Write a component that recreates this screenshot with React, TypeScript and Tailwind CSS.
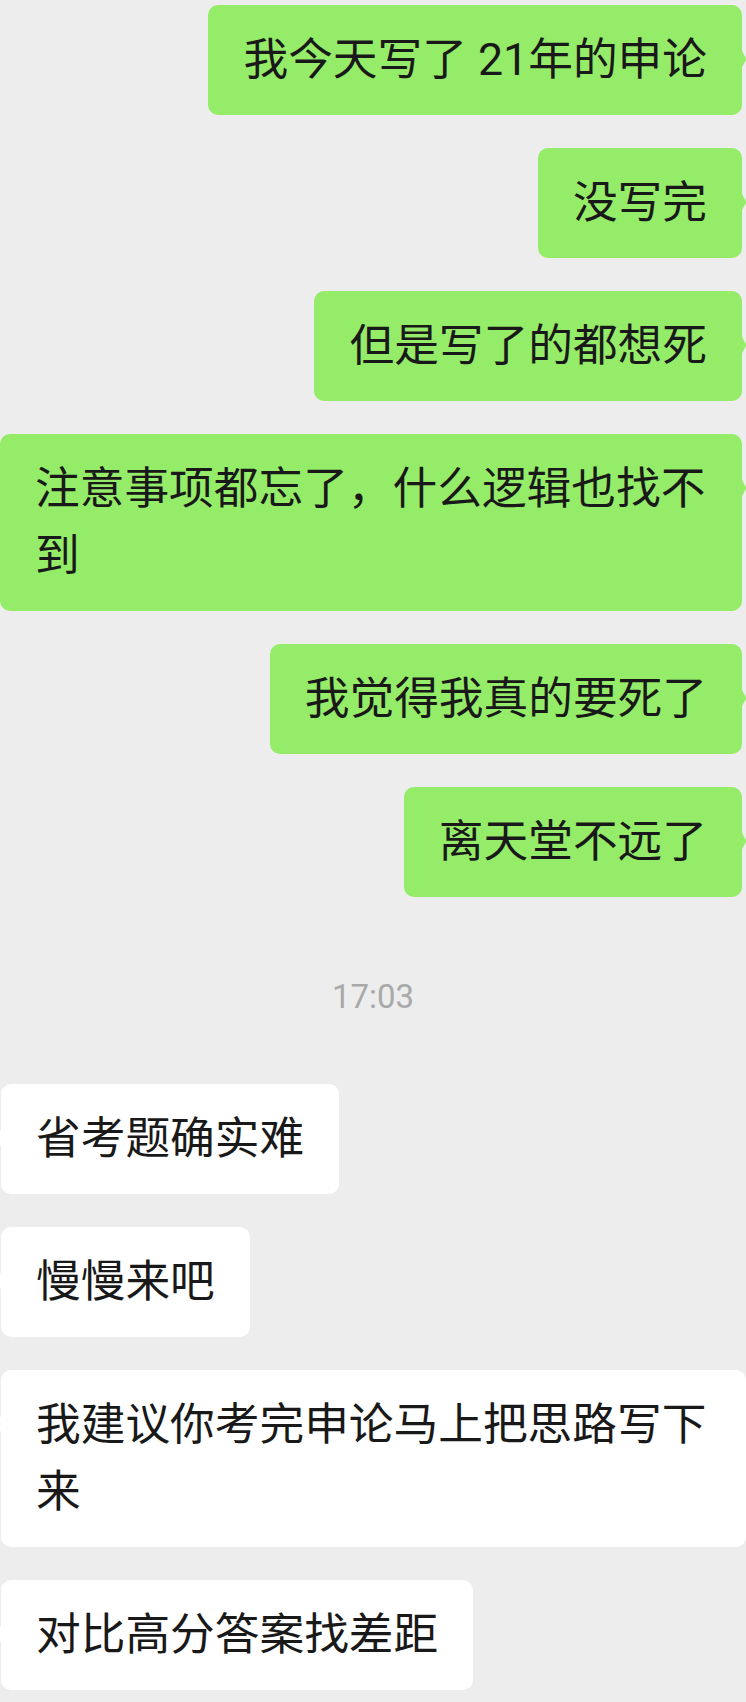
import React from "react";

type Message = {
  id: number;
  text: string;
  mine: boolean;
};

const sentBefore: Message[] = [
  { id: 1, text: "我今天写了 21年的申论", mine: true },
  { id: 2, text: "没写完", mine: true },
  { id: 3, text: "但是写了的都想死", mine: true },
  { id: 4, text: "注意事项都忘了，什么逻辑也找不到", mine: true },
  { id: 5, text: "我觉得我真的要死了", mine: true },
  { id: 6, text: "离天堂不远了", mine: true },
];

const receivedAfter: Message[] = [
  { id: 7, text: "省考题确实难", mine: false },
  { id: 8, text: "慢慢来吧", mine: false },
  { id: 9, text: "我建议你考完申论马上把思路写下来", mine: false },
  { id: 10, text: "对比高分答案找差距", mine: false },
];

function Bubble({ message }: { message: Message }) {
  if (message.mine) {
    return (
      <div className="flex justify-end pr-[4px]">
        <div className="relative rounded-[10px] bg-[#95ec69] px-[35px] py-[21.5px] text-[44.7px] leading-[67px] text-[#191919]">
          {message.text}
          {/* little tail on the right, mostly cut off by the screen edge */}
          <svg
            className="absolute -right-[4px] top-[41px]"
            width="5"
            height="26"
            viewBox="0 0 5 26"
          >
            <path d="M0 0 C1 8 5 10 5 13 C5 16 1 18 0 26 Z" fill="#95ec69" />
          </svg>
        </div>
      </div>
    );
  }

  return (
    <div className="flex justify-start pl-[1px]">
      <div className="relative rounded-[10px] bg-white px-[35px] py-[21.5px] text-[44.7px] leading-[67px] text-[#191919]">
        {message.text}
        <svg
          className="absolute -left-[4px] top-[41px]"
          width="5"
          height="26"
          viewBox="0 0 5 26"
        >
          <path d="M5 0 C4 8 0 10 0 13 C0 16 4 18 5 26 Z" fill="#ffffff" />
        </svg>
      </div>
    </div>
  );
}

export default function App() {
  return (
    <div
      className="min-h-[1702px] w-[746px] overflow-hidden bg-[#ededed] pt-[5px] pb-[12px]"
      style={{ fontFamily: 'Roboto, "Noto Sans CJK SC", "Noto Sans", sans-serif' }}
    >
      <div className="flex flex-col gap-[33px]">
        {sentBefore.map((m) => (
          <Bubble key={m.id} message={m} />
        ))}
      </div>

      <div className="mt-[80px] mb-[67px] text-center text-[33px] leading-[40px] text-[#a9a9a9]">
        17:03
      </div>

      <div className="flex flex-col gap-[33px]">
        {receivedAfter.map((m) => (
          <Bubble key={m.id} message={m} />
        ))}
      </div>
    </div>
  );
}
